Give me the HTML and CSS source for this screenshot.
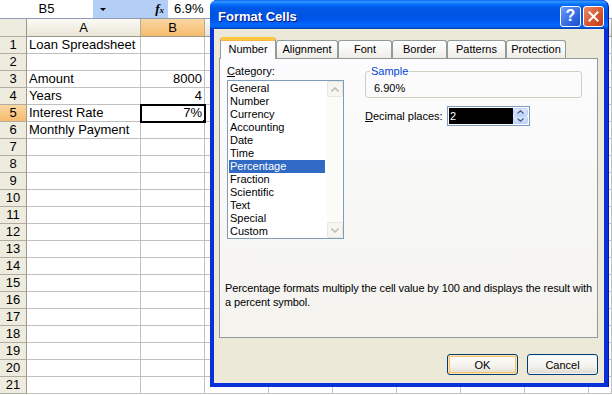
FILE: index.html
```html
<!DOCTYPE html>
<html lang="en">
<head>
    <meta charset="UTF-8">
    <title>Format Cells</title>
    <link rel="stylesheet" href="styles.css">
</head>
<body>

    <!-- Regnearket bag dialogen -->
    <div class="workbook">
        <div class="formula-bar">
            <div class="name-box">B5</div>
            <div class="name-drop"><span class="drop-arrow"></span></div>
            <div class="fx"><i>f</i><small>x</small></div>
            <div class="formula-input">6.9%</div>
        </div>

        <table class="sheet">
            <thead>
                <tr><th class="rh"></th><th class="col-a">A</th><th class="sel">B</th><th></th><th></th><th></th><th></th><th></th><th></th><th></th></tr>
            </thead>
            <tbody>
                <tr><th>1</th><td>Loan Spreadsheet</td><td></td><td></td><td></td><td></td><td></td><td></td><td></td><td></td></tr>
                <tr><th>2</th><td></td><td></td><td></td><td></td><td></td><td></td><td></td><td></td><td></td></tr>
                <tr><th>3</th><td>Amount</td><td class="num">8000</td><td></td><td></td><td></td><td></td><td></td><td></td><td></td></tr>
                <tr><th>4</th><td>Years</td><td class="num">4</td><td></td><td></td><td></td><td></td><td></td><td></td><td></td></tr>
                <tr><th class="sel">5</th><td>Interest Rate</td><td class="num active">7%</td><td></td><td></td><td></td><td></td><td></td><td></td><td></td></tr>
                <tr><th>6</th><td>Monthly Payment</td><td></td><td></td><td></td><td></td><td></td><td></td><td></td><td></td></tr>
                <tr><th>7</th><td></td><td></td><td></td><td></td><td></td><td></td><td></td><td></td><td></td></tr>
                <tr><th>8</th><td></td><td></td><td></td><td></td><td></td><td></td><td></td><td></td><td></td></tr>
                <tr><th>9</th><td></td><td></td><td></td><td></td><td></td><td></td><td></td><td></td><td></td></tr>
                <tr><th>10</th><td></td><td></td><td></td><td></td><td></td><td></td><td></td><td></td><td></td></tr>
                <tr><th>11</th><td></td><td></td><td></td><td></td><td></td><td></td><td></td><td></td><td></td></tr>
                <tr><th>12</th><td></td><td></td><td></td><td></td><td></td><td></td><td></td><td></td><td></td></tr>
                <tr><th>13</th><td></td><td></td><td></td><td></td><td></td><td></td><td></td><td></td><td></td></tr>
                <tr><th>14</th><td></td><td></td><td></td><td></td><td></td><td></td><td></td><td></td><td></td></tr>
                <tr><th>15</th><td></td><td></td><td></td><td></td><td></td><td></td><td></td><td></td><td></td></tr>
                <tr><th>16</th><td></td><td></td><td></td><td></td><td></td><td></td><td></td><td></td><td></td></tr>
                <tr><th>17</th><td></td><td></td><td></td><td></td><td></td><td></td><td></td><td></td><td></td></tr>
                <tr><th>18</th><td></td><td></td><td></td><td></td><td></td><td></td><td></td><td></td><td></td></tr>
                <tr><th>19</th><td></td><td></td><td></td><td></td><td></td><td></td><td></td><td></td><td></td></tr>
                <tr><th>20</th><td></td><td></td><td></td><td></td><td></td><td></td><td></td><td></td><td></td></tr>
                <tr><th>21</th><td></td><td></td><td></td><td></td><td></td><td></td><td></td><td></td><td></td></tr>
            </tbody>
        </table>
    </div>

    <!-- Format Cells dialog -->
    <div class="dialog">
        <div class="title-bar">
            <span class="title">Format Cells</span>
            <span class="cap-btn help">?</span>
            <span class="cap-btn close">
                <svg width="11" height="11" viewBox="0 0 11 11"><path d="M1.5 1.5 L9.5 9.5 M9.5 1.5 L1.5 9.5" stroke="#fff" stroke-width="2" stroke-linecap="square"/></svg>
            </span>
        </div>

        <div class="dialog-body">
            <div class="tabs">
                <div class="tab active">Number</div>
                <div class="tab">Alignment</div>
                <div class="tab">Font</div>
                <div class="tab">Border</div>
                <div class="tab">Patterns</div>
                <div class="tab">Protection</div>
            </div>

            <div class="tab-panel">
                <div class="panel-top">
                    <div class="category">
                        <label><u>C</u>ategory:</label>
                        <div class="listbox">
                            <ul>
                                <li>General</li>
                                <li>Number</li>
                                <li>Currency</li>
                                <li>Accounting</li>
                                <li>Date</li>
                                <li>Time</li>
                                <li class="selected">Percentage</li>
                                <li>Fraction</li>
                                <li>Scientific</li>
                                <li>Text</li>
                                <li>Special</li>
                                <li>Custom</li>
                            </ul>
                            <div class="scrollbar">
                                <span class="scroll-btn"><svg width="8" height="5" viewBox="0 0 8 5"><path d="M0.5 4.5 L4 1 L7.5 4.5" fill="none" stroke="#c4c2b8" stroke-width="1.6"/></svg></span>
                                <span class="scroll-btn"><svg width="8" height="5" viewBox="0 0 8 5"><path d="M0.5 0.5 L4 4 L7.5 0.5" fill="none" stroke="#c4c2b8" stroke-width="1.6"/></svg></span>
                            </div>
                        </div>
                    </div>

                    <div class="options">
                        <fieldset class="sample">
                            <legend>Sample</legend>
                            <div class="sample-value">6.90%</div>
                        </fieldset>
                        <div class="decimals">
                            <label><u>D</u>ecimal places:</label>
                            <div class="spin">
                                <span class="spin-value">2</span>
                                <span class="spin-btns">
                                    <span class="spin-btn"><svg width="7" height="4" viewBox="0 0 7 4"><path d="M0.5 3.5 L3.5 0.8 L6.5 3.5" fill="none" stroke="#4d6185" stroke-width="1.4"/></svg></span>
                                    <span class="spin-btn"><svg width="7" height="4" viewBox="0 0 7 4"><path d="M0.5 0.5 L3.5 3.2 L6.5 0.5" fill="none" stroke="#4d6185" stroke-width="1.4"/></svg></span>
                                </span>
                            </div>
                        </div>
                    </div>
                </div>

                <p class="description">Percentage formats multiply the cell value by 100 and displays the result with a percent symbol.</p>
            </div>

            <div class="buttons">
                <button class="btn default">OK</button>
                <button class="btn">Cancel</button>
            </div>
        </div>
    </div>

</body>
</html>
```

FILE: styles.css
```css
/* Side og baggrund */
body {
    margin: 0;
    width: 612px;
    height: 395px;
    overflow: hidden;
    position: relative;
    background: #fff;
    font-family: "Liberation Sans", Arial, sans-serif;
    color: #000;
}

/* Formellinje */
.formula-bar {
    display: flex;
    height: 18px;
    border-bottom: 1px solid #8e9bb3;
    font-size: 13px;
    line-height: 18px;
}

.name-box {
    width: 93px;
    text-align: center;
    background: #fff;
}

.name-drop {
    width: 20px;
    display: flex;
    align-items: center;
    justify-content: center;
    background: #b3cff6;
}

.drop-arrow {
    width: 0;
    height: 0;
    border-left: 3px solid transparent;
    border-right: 3px solid transparent;
    border-top: 3px solid #000;
}

.fx {
    width: 51px;
    padding-right: 4px;
    text-align: right;
    background: #b3cff6;
    font-family: "Liberation Serif", serif;
    font-weight: bold;
}

.fx small {
    font-size: 9px;
    font-style: italic;
}

.formula-input {
    flex: 1;
    padding-left: 6px;
    background: #fff;
}

/* Regneark */
.sheet {
    width: 612px;
    border-collapse: separate;
    border-spacing: 0;
    table-layout: fixed;
    font-size: 13px;
}

.sheet th,
.sheet td {
    box-sizing: border-box;
    width: 64px;
    height: 17px;
    padding: 0 2px;
    line-height: 16px;
    border-right: 1px solid #c0c0c0;
    border-bottom: 1px solid #c0c0c0;
    white-space: nowrap;
    overflow: hidden;
    font-weight: normal;
}

/* sidste kolonne er kun delvist synlig */
.sheet th:last-child,
.sheet td:last-child {
    width: 23px;
}

.sheet thead th {
    height: 18px;
    text-align: center;
    background: linear-gradient(#fbfaf5, #e9e6d7);
    border-right-color: #b2ae9f;
    border-bottom-color: #9d998a;
}

.sheet .rh,
.sheet tbody th {
    width: 27px;
    padding: 0;
    text-align: center;
    background: #eeecdf;
    border-right-color: #9d998a;
    border-bottom-color: #b2ae9f;
}

.sheet .col-a {
    width: 114px;
}

.sheet th.sel {
    background: linear-gradient(#fad7a3, #f6bb6c);
}

.sheet .num {
    text-align: right;
}

.sheet .active {
    position: relative;
    outline: 2px solid #000;
    outline-offset: -1px;
}

.sheet .active::after {
    content: "";
    position: absolute;
    right: -3px;
    bottom: -3px;
    width: 5px;
    height: 5px;
    background: #000;
    border: 1px solid #fff;
    box-sizing: border-box;
}

/* Dialog */
.dialog {
    position: absolute;
    left: 210px;
    top: 0;
    width: 398px;
    height: 387px;
    display: flex;
    flex-direction: column;
    background: #0831d9;
    border-radius: 7px 7px 0 0;
    font-size: 11px;
    box-shadow: 1px 0 0 #0019a8;
}

.title-bar {
    height: 29px;
    flex: none;
    display: flex;
    align-items: center;
    gap: 2px;
    padding: 3px 4px 0 8px;
    box-sizing: border-box;
    border-radius: 7px 7px 0 0;
    background: linear-gradient(#0058ee 0%, #3593ff 4%, #288eff 8%, #127dff 12%, #036ffc 16%, #0262ee 22%, #0057e5 30%, #0054e3 56%, #0055eb 66%, #005bf5 76%, #026afe 86%, #0062ef 92%, #0052d6 96%, #0040ab 100%);
}

.title {
    flex: 1;
    color: #fff;
    font-size: 13px;
    font-weight: bold;
    text-shadow: 1px 1px #0a1883;
}

.cap-btn {
    width: 21px;
    height: 21px;
    box-sizing: border-box;
    border: 1px solid #fff;
    border-radius: 3px;
    display: flex;
    align-items: center;
    justify-content: center;
    color: #fff;
    font-size: 16px;
    font-weight: bold;
}

.help {
    background: linear-gradient(135deg, #6a9cf8, #2c62de 70%, #1d4fc9);
}

.close {
    background: linear-gradient(135deg, #eb8c68, #d5532c 60%, #c0401c);
}

.dialog-body {
    flex: 1;
    display: flex;
    flex-direction: column;
    margin: 0 4px 4px;
    padding: 8px 6px 8px 5px;
    background: #ece9d8;
}

/* Faneblade */
.tabs {
    display: flex;
    align-items: flex-end;
    height: 21px;
    margin-left: 1px;
}

.tab {
    height: 18px;
    box-sizing: border-box;
    border: 1px solid #919b9c;
    border-bottom: none;
    border-radius: 3px 3px 0 0;
    background: linear-gradient(#fefefe, #f4f3ee 70%, #ecebe6);
    text-align: center;
    line-height: 17px;
}

.tab:nth-child(1) { width: 56px; }
.tab:nth-child(2) { width: 62px; }
.tab:nth-child(3) { width: 54px; }
.tab:nth-child(4) { width: 55px; }
.tab:nth-child(5) { width: 59px; }
.tab:nth-child(6) { width: 60px; }

.tab.active {
    height: 22px;
    margin-bottom: -1px;
    position: relative;
    z-index: 1;
    border-top: 3px solid #ffc83c;
    background: #fcfcfe;
    line-height: 18px;
    box-shadow: inset 0 1px 0 #f9b542;
}

.tab-panel {
    height: 280px;
    box-sizing: border-box;
    display: flex;
    flex-direction: column;
    padding: 6px 0 28px;
    border: 1px solid #919b9c;
    background: linear-gradient(#fcfcfe, #f4f3ee);
}

.panel-top {
    display: flex;
    gap: 21px;
    padding-left: 7px;
}

.category label {
    display: block;
    line-height: 13px;
    margin-bottom: 2px;
}

.listbox {
    width: 117px;
    height: 159px;
    box-sizing: border-box;
    display: flex;
    border: 1px solid #7f9db9;
    background: #fff;
}

.listbox ul {
    flex: 1;
    margin: 0;
    padding: 1px 2px 0 1px;
    list-style: none;
}

.listbox li {
    line-height: 13px;
    padding-left: 1px;
}

.listbox li.selected {
    background: #316ac5;
    color: #fff;
}

.scrollbar {
    width: 16px;
    display: flex;
    flex-direction: column;
    justify-content: space-between;
    background: #fbfbf8;
}

.scroll-btn {
    height: 16px;
    box-sizing: border-box;
    display: flex;
    align-items: center;
    justify-content: center;
    border: 1px solid #e8e7df;
    border-radius: 2px;
    background: #f6f5f0;
}

.options {
    width: 217px;
}

.sample {
    margin: 0;
    padding: 5px 8px 3px;
    border: 1px solid #d0d0bf;
    border-radius: 3px;
}

.sample legend {
    padding: 0 1px;
    margin-left: -4px;
    line-height: 12px;
    color: #0046d5;
}

.sample-value {
    line-height: 12px;
}

.decimals {
    display: flex;
    align-items: center;
    margin-top: 8px;
}

.decimals label {
    width: 82px;
}

.spin {
    width: 83px;
    height: 20px;
    box-sizing: border-box;
    display: flex;
    padding: 1px;
    border: 1px solid #7f9db9;
    background: #fff;
}

.spin-value {
    flex: 1;
    background: #000;
    color: #fff;
    line-height: 16px;
    padding-left: 1px;
}

.spin-btns {
    width: 15px;
    display: flex;
    flex-direction: column;
}

.spin-btn {
    flex: 1;
    display: flex;
    align-items: center;
    justify-content: center;
    border: 1px solid #bcd0f8;
    border-radius: 2px;
    background: linear-gradient(#dde7fd, #c4d5f9);
}

.description {
    margin: auto 0 0;
    padding-left: 5px;
    line-height: 14px;
    letter-spacing: -0.1px;
}

/* Knapper */
.buttons {
    display: flex;
    justify-content: flex-end;
    gap: 9px;
    margin-top: 16px;
}

.btn {
    width: 71px;
    height: 21px;
    padding: 0;
    border: 1px solid #003c74;
    border-radius: 3px;
    background: linear-gradient(#fff, #f3f2ec 60%, #e3e0d4 90%, #d6d0c5);
    font-family: "Liberation Sans", Arial, sans-serif;
    font-size: 11px;
    color: #000;
    box-shadow: inset 0 0 0 1px #eef3fc;
}

.btn.default {
    box-shadow: inset 0 0 0 1px #fce7b4, inset 0 0 0 2px #f6c36c;
}
```
